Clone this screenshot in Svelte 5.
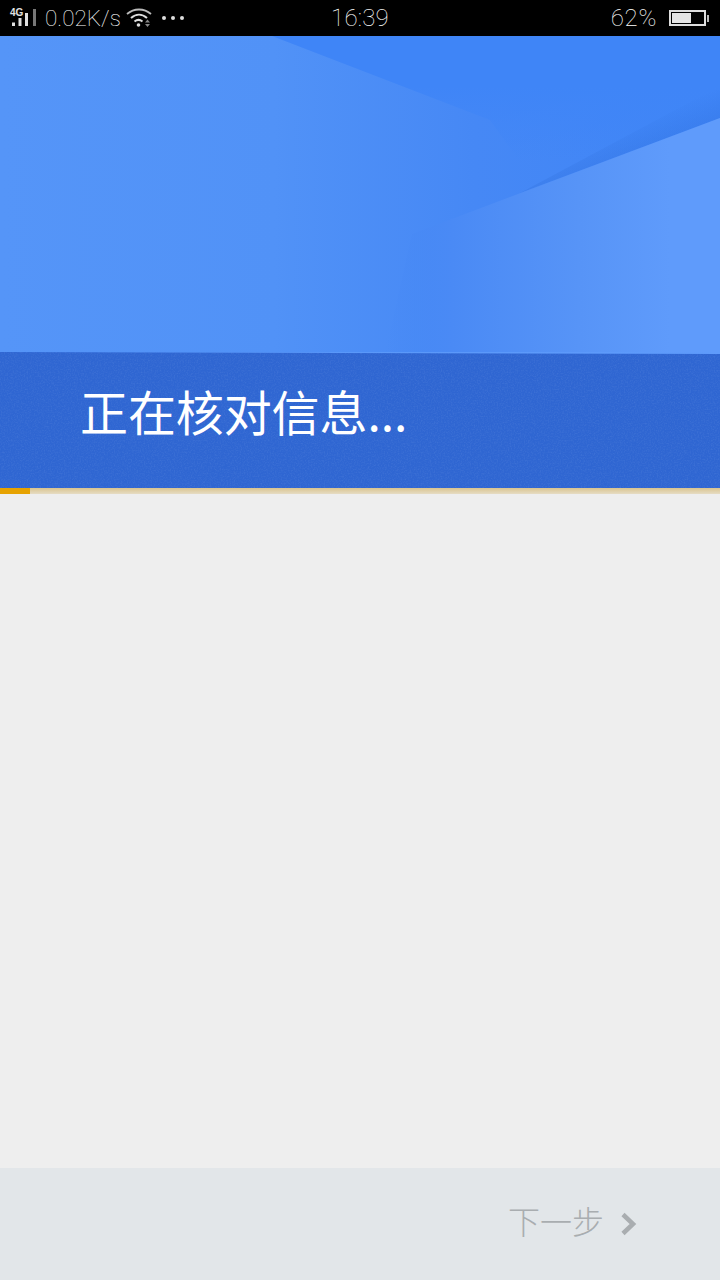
<script>
  // Screen shown while the account details are being checked
  const title = '正在核对信息...';
  const progress = 30;
  const battery = 62;
</script>

<div class="screen">
  <div class="status-bar">
    <div class="status-left">
      <svg class="signal" width="28" height="20" viewBox="0 0 28 20">
        <text x="1" y="8" class="net">4G</text>
        <rect x="3" y="14.500" width="3" height="3.500" fill="#e0e0e0" />
        <rect x="9.500" y="10" width="3" height="8" fill="#e0e0e0" />
        <rect x="16" y="5" width="3" height="13" fill="#e0e0e0" />
        <rect x="24" y="1" width="3" height="17" fill="#777" />
      </svg>
      <span class="speed">0.02K/s</span>
      <svg class="wifi" width="26" height="20" viewBox="0 0 26 20" fill="none">
        <path d="M1 6 C8 0 18 0 25 6" stroke="#bbb" stroke-width="1.800" />
        <path d="M5 10 C10 5.500 16 5.500 21 10" stroke="#ddd" stroke-width="2" />
        <path d="M8.500 13.500 C11 11.500 14 11.500 16.500 13.500" stroke="#ddd" stroke-width="2" />
        <circle cx="12.500" cy="17" r="1.800" fill="#ddd" />
        <path d="M19 14.500 h5 l-2.500 -3 z M19 16 h5 l-2.500 3 z" fill="#888" />
      </svg>
      <div class="dots"><i></i><i></i><i></i></div>
    </div>
    <span class="clock">16:39</span>
    <div class="status-right">
      <span class="percent">{battery}%</span>
      <div class="battery">
        <div class="battery-body"><div class="battery-fill" style="width: {battery}%"></div></div>
        <div class="battery-tip"></div>
      </div>
    </div>
  </div>

  <div class="hero">
    <div class="facets">
      <svg width="720" height="318" viewBox="0 0 720 318">
        <defs>
          <linearGradient id="base" x1="0" y1="0" x2="1" y2="0">
            <stop offset="0" stop-color="#5595f8" />
            <stop offset="0.38" stop-color="#5192f7" />
            <stop offset="0.66" stop-color="#4688f5" />
            <stop offset="1" stop-color="#3f85f7" />
          </linearGradient>
          <linearGradient id="topFacet" gradientUnits="userSpaceOnUse" x1="0" y1="50" x2="0" y2="125">
            <stop offset="0" stop-color="#3f85f7" />
            <stop offset="1" stop-color="#3f85f7" stop-opacity="0" />
          </linearGradient>
          <linearGradient id="wedge" gradientUnits="userSpaceOnUse" x1="385" y1="0" x2="720" y2="0">
            <stop offset="0" stop-color="#4587f4" stop-opacity="0" />
            <stop offset="0.2" stop-color="#4a8af5" />
            <stop offset="0.58" stop-color="#5794f7" />
            <stop offset="0.85" stop-color="#5f9bfb" />
            <stop offset="1" stop-color="#5f9bfb" />
          </linearGradient>
          <linearGradient id="edgeShade" gradientUnits="userSpaceOnUse" x1="640" y1="112" x2="630" y2="85">
            <stop offset="0" stop-color="#2f6fdc" stop-opacity="0.3" />
            <stop offset="1" stop-color="#2f6fdc" stop-opacity="0" />
          </linearGradient>
        </defs>
        <rect width="720" height="318" fill="url(#base)" />
        <polygon points="272,0 720,0 720,140 530,140 490,84" fill="url(#topFacet)" />
        <polygon points="720,50 720,82 520,157" fill="url(#edgeShade)" />
        <polygon points="720,82 412,198 385,318 720,318" fill="url(#wedge)" />
      </svg>
    </div>
    <div class="banner">
      <svg class="grain" width="720" height="136">
        <filter id="noise">
          <feTurbulence type="fractalNoise" baseFrequency="0.7" numOctaves="2" seed="4" />
          <feColorMatrix values="0 0 0 0 0.55  0 0 0 0 0.7  0 0 0 0 1  1.4 0 0 0 -0.55" />
        </filter>
        <rect width="720" height="136" filter="url(#noise)" opacity="0.14" />
      </svg>
      <h1>{title}</h1>
    </div>
  </div>

  <div class="progress">
    <div class="progress-fill" style="width: {progress}px"></div>
  </div>

  <div class="content"></div>

  <div class="footer">
    <button class="next" disabled>
      <span>下一步</span>
      <svg width="18" height="24" viewBox="0 0 18 24" fill="none">
        <path d="M3 2.500 L13 12 L3 21.500" stroke="#a9adb0" stroke-width="4.500" />
      </svg>
    </button>
  </div>
</div>

<style>
  :global(body) {
    margin: 0;
  }

  .screen {
    width: 720px;
    height: 1280px;
    display: flex;
    flex-direction: column;
    background: #eeeeee;
    font-family: "Noto Sans CJK SC", "Liberation Sans", sans-serif;
    overflow: hidden;
  }

  .status-bar {
    height: 36px;
    flex-shrink: 0;
    background: #000;
    color: #fff;
    display: grid;
    grid-template-columns: 1fr auto 1fr;
    align-items: center;
    font-family: Roboto, "Liberation Sans", sans-serif;
    font-weight: 100;
    font-size: 24px;
  }

  .status-left {
    display: flex;
    align-items: center;
    padding-left: 9px;
  }

  .net {
    font-size: 10px;
    font-weight: 700;
    fill: #e0e0e0;
    font-family: "Liberation Sans", sans-serif;
  }

  .speed {
    margin-left: 8px;
    font-size: 22.5px;
    line-height: 36px;
  }

  .wifi {
    margin-left: 5px;
  }

  .dots {
    display: flex;
    gap: 4.5px;
    margin-left: 10px;
  }

  .dots i {
    width: 4.5px;
    height: 4.5px;
    border-radius: 50%;
    background: #ddd;
  }

  .clock {
    letter-spacing: 0.2px;
  }

  .percent {
    letter-spacing: 0.7px;
  }

  .status-right {
    display: flex;
    align-items: center;
    justify-content: flex-end;
    padding-right: 11px;
  }

  .battery {
    display: flex;
    align-items: center;
    margin-left: 12px;
  }

  .battery-body {
    width: 31px;
    height: 10px;
    border: 2px solid #ddd;
    padding: 1px;
  }

  .battery-fill {
    height: 100%;
    background: #e4e4e4;
  }

  .battery-tip {
    width: 2px;
    height: 7px;
    margin-left: 1px;
    background: #bbb;
  }

  .hero {
    flex-shrink: 0;
    display: flex;
    flex-direction: column;
    background: linear-gradient(90deg, #5595f8, #5f9bfb);
  }

  .facets {
    height: 316px;
    overflow: hidden;
  }

  .facets svg {
    display: block;
  }

  .banner {
    height: 136px;
    position: relative;
    background: #2f66d2;
    clip-path: polygon(0 0, 100% 2px, 100% 100%, 0 100%);
    display: flex;
    align-items: center;
    padding-left: 80px;
    box-sizing: border-box;
  }

  .grain {
    position: absolute;
    top: 0;
    left: 0;
  }

  .banner h1 {
    position: relative;
    margin: 0 0 20px;
    color: #fff;
    font-size: 48px;
    font-weight: 400;
    line-height: 1;
    letter-spacing: -0.1px;
  }

  .progress {
    height: 6px;
    flex-shrink: 0;
    background: linear-gradient(#d9c48f, #e6dcc4);
  }

  .progress-fill {
    height: 100%;
    background: #e6a200;
  }

  .content {
    flex: 1;
    background: #eeeeee;
  }

  .footer {
    height: 112px;
    flex-shrink: 0;
    background: #e2e6e9;
    display: flex;
    align-items: center;
    justify-content: flex-end;
    padding-right: 82px;
  }

  .next {
    display: flex;
    align-items: center;
    gap: 16px;
    padding: 0;
    border: none;
    background: none;
    color: #a9adb0;
    font-family: inherit;
    font-size: 32px;
    font-weight: 300;
  }

  .next span {
    margin-bottom: 8px;
  }
</style>
